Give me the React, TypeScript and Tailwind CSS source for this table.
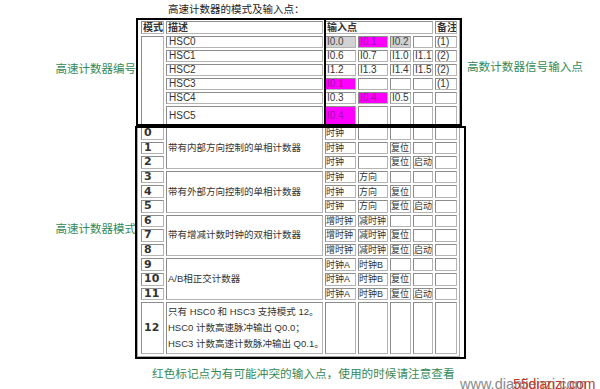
import React from 'react';

type Tone = 'plain' | 'gray' | 'pink';
type Slot = [string, Tone];

interface HscRow {
  name: string;
  inputs: Slot[];
  note: string;
}

interface ModeGroup {
  desc: string;
  start: number;
  rows: string[][];
}

const HSC_ROWS: HscRow[] = [
  { name: 'HSC0', inputs: [['I0.0', 'gray'], ['I0.1', 'pink'], ['I0.2', 'gray'], ['', 'plain']], note: '(1)' },
  { name: 'HSC1', inputs: [['I0.6', 'plain'], ['I0.7', 'plain'], ['I1.0', 'plain'], ['I1.1', 'plain']], note: '(2)' },
  { name: 'HSC2', inputs: [['I1.2', 'plain'], ['I1.3', 'plain'], ['I1.4', 'plain'], ['I1.5', 'plain']], note: '(2)' },
  { name: 'HSC3', inputs: [['I0.1', 'pink'], ['', 'plain'], ['', 'plain'], ['', 'plain']], note: '(1)' },
  { name: 'HSC4', inputs: [['I0.3', 'plain'], ['I0.4', 'pink'], ['I0.5', 'plain'], ['', 'plain']], note: '' },
  { name: 'HSC5', inputs: [['I0.4', 'pink'], ['', 'plain'], ['', 'plain'], ['', 'plain']], note: '' },
];

const MODE_GROUPS: ModeGroup[] = [
  {
    desc: '带有内部方向控制的单相计数器',
    start: 0,
    rows: [
      ['时钟', '', '', '', ''],
      ['时钟', '', '复位', '', ''],
      ['时钟', '', '复位', '启动', ''],
    ],
  },
  {
    desc: '带有外部方向控制的单相计数器',
    start: 3,
    rows: [
      ['时钟', '方向', '', '', ''],
      ['时钟', '方向', '复位', '', ''],
      ['时钟', '方向', '复位', '启动', ''],
    ],
  },
  {
    desc: '带有增减计数时钟的双相计数器',
    start: 6,
    rows: [
      ['增时钟', '减时钟', '', '', ''],
      ['增时钟', '减时钟', '复位', '', ''],
      ['增时钟', '减时钟', '复位', '启动', ''],
    ],
  },
  {
    desc: 'A/B相正交计数器',
    start: 9,
    rows: [
      ['时钟A', '时钟B', '', '', ''],
      ['时钟A', '时钟B', '复位', '', ''],
      ['时钟A', '时钟B', '复位', '启动', ''],
    ],
  },
];

function Cell({ children, tone = 'plain', className = '' }: { children?: React.ReactNode; tone?: Tone; className?: string }) {
  const look =
    tone === 'pink'
      ? 'bg-[#ff00ff] text-[#a312a8]'
      : tone === 'gray'
      ? 'bg-[#d2d2d2] text-[#444]'
      : 'bg-white text-[#333]';
  return (
    <div
      className={`flex items-center overflow-hidden whitespace-nowrap border border-t-[#8c8c8c] border-l-[#8c8c8c] border-b-[#b4b4b4] border-r-[#b4b4b4] ${look} ${className}`}
    >
      {children}
    </div>
  );
}

function ModeNo({ n }: { n: number }) {
  return <Cell className="pl-[2px] font-['DejaVu_Sans',sans-serif] text-[11px] font-bold text-[#222]">{n}</Cell>;
}

export default function App() {
  return (
    <div className="relative h-[389px] w-[600px] overflow-hidden bg-white font-['Liberation_Sans','Noto_Sans_CJK_SC',sans-serif]">
      <div className="h-[18px] pl-[168px] pt-[3px] text-[10.5px] leading-[12px] text-[#222]">高速计数器的模式及输入点：</div>

      <div className="flex h-[338px]">
        <div className="flex w-[137px] flex-col items-end pr-[1px] pt-[43px] font-['Noto_Sans_CJK_SC',sans-serif] text-[11.5px] leading-[14px] text-[#348a5a]">
          <div>高速计数器编号</div>
          <div className="mt-[146px]">高速计数器模式</div>
        </div>

        <div className="self-start border border-[#aaa] py-[2px] pl-[3px] pr-[2px]">
          <div className="grid grid-cols-[23px_157px_31px_30px_21px_20px_22px] grid-rows-[13px_repeat(5,12px)_19px_repeat(12,12.6px)_52px] gap-[2px] text-[10px] leading-[12px]">
            <Cell className="pl-[1px] font-bold text-[#111]">模式</Cell>
            <Cell className="pl-[1px] font-bold text-[#111]">描述</Cell>
            <Cell className="col-span-4 pl-[1px] font-bold text-[#111]">输入点</Cell>
            <Cell className="pl-[1px] font-bold text-[#111]">备注</Cell>

            <Cell className="row-span-6" />
            {HSC_ROWS.map((r) => (
              <React.Fragment key={r.name}>
                <Cell className="pl-[2px]">{r.name}</Cell>
                {r.inputs.map(([t, tone], i) => (
                  <Cell key={i} tone={tone} className="pl-[1px]">
                    {t}
                  </Cell>
                ))}
                <Cell className="pl-[1px]">{r.note}</Cell>
              </React.Fragment>
            ))}

            {MODE_GROUPS.map((g) =>
              g.rows.map((row, ri) => (
                <React.Fragment key={`${g.start}-${ri}`}>
                  <ModeNo n={g.start + ri} />
                  {ri === 0 && <Cell className="row-span-3 pl-[1px] text-[9.5px]">{g.desc}</Cell>}
                  {row.map((t, ci) => (
                    <Cell key={ci} className="text-[9px]">
                      {t}
                    </Cell>
                  ))}
                </React.Fragment>
              ))
            )}

            <ModeNo n={12} />
            <Cell className="flex-col items-start justify-center pl-[1px] text-[9.5px] leading-[16px]">
              <span>只有 HSC0 和 HSC3 支持模式 12。</span>
              <span>HSC0 计数高速脉冲输出 Q0.0；</span>
              <span>HSC3 计数高速计数脉冲输出 Q0.1。</span>
            </Cell>
            <Cell />
            <Cell />
            <Cell />
            <Cell />
            <Cell />
          </div>
        </div>

        <div className="pl-[7px] pt-[41px] font-['Noto_Sans_CJK_SC',sans-serif] text-[11.6px] leading-[14px] whitespace-nowrap text-[#348a5a]">
          高数计数器信号输入点
        </div>
      </div>

      <div className="mt-[10px] pl-[152px] font-['Noto_Sans_CJK_SC',sans-serif] text-[11.65px] leading-[14px] whitespace-nowrap text-[#348a5a]">
        红色标记点为有可能冲突的输入点，使用的时候请注意查看
      </div>

      {/* watermark stamped over the bottom-right corner */}
      <div className="pointer-events-none absolute left-[460px] top-[377px] whitespace-nowrap text-[14.5px] leading-[14px] text-[#8a8a8a]">
        www.dianjienzi.com
      </div>
      <div className="pointer-events-none absolute left-[513px] top-[377px] whitespace-nowrap text-[14px] leading-[14px] text-[#c23a2a]">
        55dianzi.com
      </div>

      {/* hand-drawn marker boxes laid over the table */}
      <div className="pointer-events-none absolute left-[136px] top-[18px] h-[108px] w-[190px] border-2 border-black" />
      <div className="pointer-events-none absolute left-[324px] top-[18px] h-[108px] w-[138px] border-2 border-black" />
      <div className="pointer-events-none absolute left-[135px] top-[126px] h-[233px] w-[331px] border-2 border-black" />
    </div>
  );
}
